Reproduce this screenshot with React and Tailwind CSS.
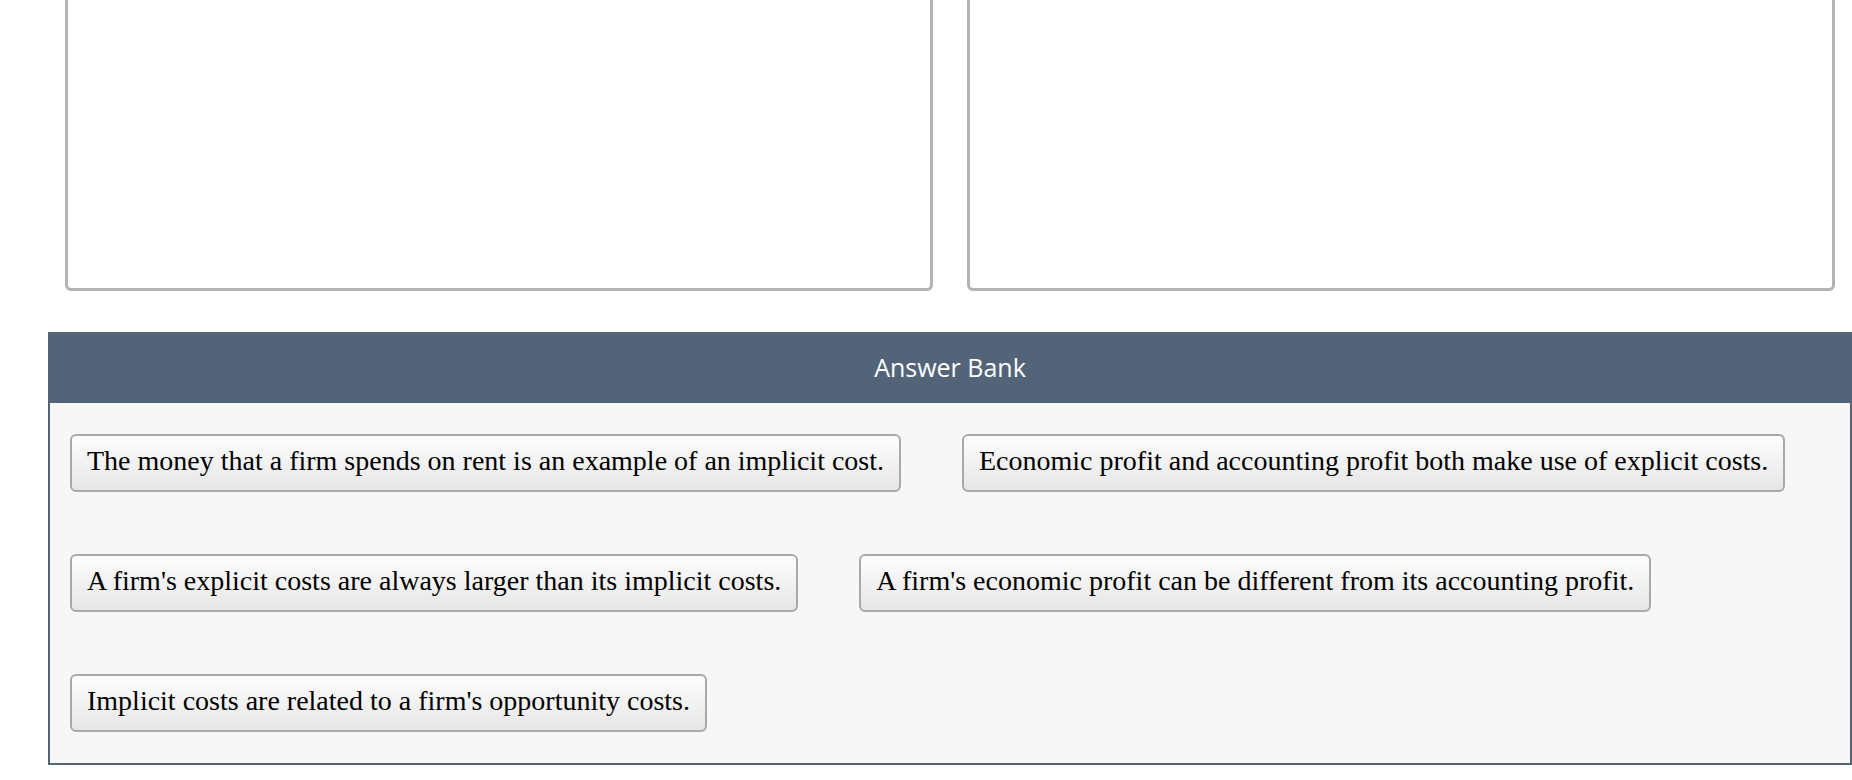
import React from "react";

const answers = [
  "The money that a firm spends on rent is an example of an implicit cost.",
  "Economic profit and accounting profit both make use of explicit costs.",
  "A firm's explicit costs are always larger than its implicit costs.",
  "A firm's economic profit can be different from its accounting profit.",
  "Implicit costs are related to a firm's opportunity costs.",
];

function DropZone() {
  return (
    <div className="w-[868px] h-[291px] bg-white border-x-[3px] border-b-[3px] border-[#b3b3b3] rounded-b-[6px]" />
  );
}

export default function App() {
  return (
    <div className="w-[1852px] h-[780px] bg-white overflow-hidden">
      <div className="flex gap-[34px] pl-[65px]">
        <DropZone />
        <DropZone />
      </div>

      <div className="ml-[48px] mt-[41px] w-[1804px] border-2 border-[#536479] bg-[#f7f7f7]">
        <div
          className="h-[71px] -mt-[2px] bg-[#536479] flex items-center justify-center text-white text-[25px]"
          style={{ fontFamily: '"Open Sans", sans-serif' }}
        >
          Answer Bank
        </div>
        <div className="flex flex-wrap gap-x-[61px] gap-y-[62px] pt-[31px] pb-[31px] pl-[20px] pr-[20px]">
          {answers.map((a) => (
            <div
              key={a}
              className="h-[58px] px-[15px] flex items-center border-2 border-[#a9a9a9] rounded-[6px] bg-gradient-to-b from-[#fdfdfd] to-[#e6e6e6] text-black text-[28px] leading-[30px] pb-[4px]"
              style={{ fontFamily: '"Liberation Serif", "Times New Roman", serif' }}
            >
              {a}
            </div>
          ))}
        </div>
      </div>
    </div>
  );
}
